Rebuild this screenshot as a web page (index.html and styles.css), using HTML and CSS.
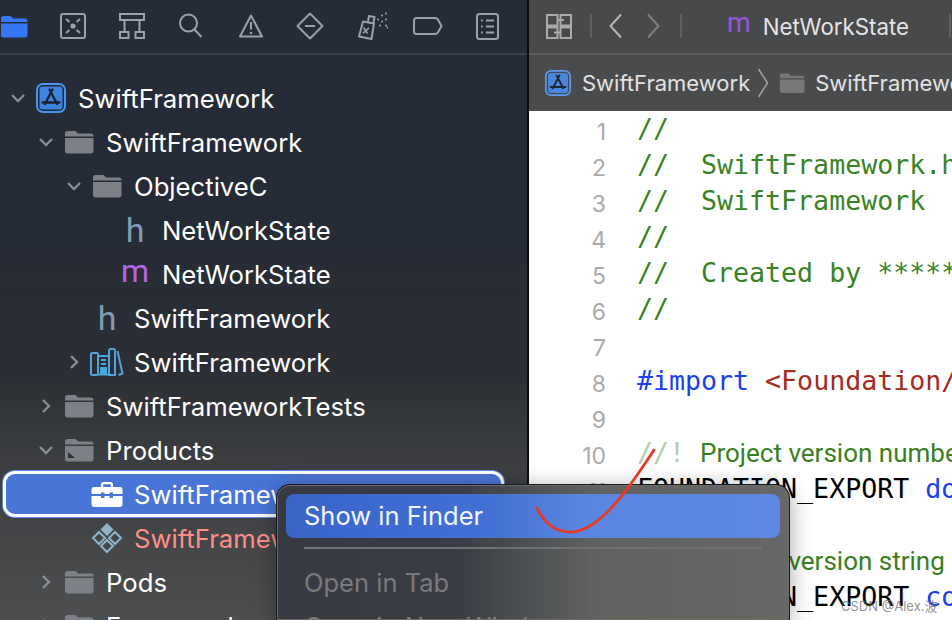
FILE: index.html
```html
<!DOCTYPE html>
<html lang="en">
<head>
<meta charset="utf-8">
<title>Xcode</title>
<link rel="stylesheet" href="styles.css">
</head>
<body>
<div class="app">
  <aside class="sidebar">
    <div class="nav-tabs">
      <svg class="tab tab-folder" width="28" height="24" viewBox="0 0 28 24"><path fill="#3478f6" d="M1 4.500C1 3 2 2 3.500 2h6c1 0 1.600.4 2.300 1.100L13 4.500h12c1.500 0 2.500 1 2.500 2.500v1H1zM1 9.500h26.500V21c0 1.500-1 2.500-2.500 2.500H3.500C2 23.500 1 22.500 1 21z"/></svg>
      <svg class="tab" width="26" height="26" viewBox="0 0 26 26"><rect x="1" y="1" width="24" height="24" rx="2" /><circle cx="13" cy="13" r="2.600" class="fill"/><path d="M6 6l3.500 3M20 6l-3.500 3M6 20l3.500-3M20 20l-3.500-3"/></svg>
      <svg class="tab" width="26" height="26" viewBox="0 0 26 26"><rect x="1" y="1" width="24" height="6"/><rect x="1" y="19" width="8.500" height="6"/><rect x="16.500" y="19" width="8.500" height="6"/><path d="M5.500 7v12M20.500 7v12"/></svg>
      <svg class="tab" width="24" height="26" viewBox="0 0 24 26"><circle cx="9.500" cy="10" r="8.500"/><path d="M15.500 16.500l7 7.500"/></svg>
      <svg class="tab" width="24" height="24" viewBox="0 0 24 24"><path stroke-linejoin="round" d="M12 1.500L23 22.500H1z"/><path d="M12 8v7.500"/><circle cx="12" cy="19" r="1.300" class="fill"/></svg>
      <svg class="tab" width="28" height="28" viewBox="0 0 28 28"><path stroke-linejoin="round" d="M14 1.500L26.500 14 14 26.500 1.500 14z"/><path d="M9 14h10"/></svg>
      <svg class="tab" width="38" height="28" viewBox="0 0 38 28"><path stroke-linejoin="round" d="M13 9.500l11 2L21.500 27 9 24.500zM18 9.500l1-5.500 5.500 1-1 6"/><path d="M13.500 15.500l4 6M19 15.800l-6 5.400" stroke-width="1.600"/><path class="dots" d="M36 1.500h.1M32 3.500h.1M36 7.500h.1M28 7.500h.1M32 9.500h.1M37.500 15.500h.1M30 13.500h.1M36 13.500h.1"/></svg>
      <svg class="tab" width="30" height="20" viewBox="0 0 30 20"><path stroke-linejoin="round" d="M3.500 2H22c1.500 0 2.300.7 3 1.800L28.500 10 25 16.200c-.7 1.100-1.500 1.800-3 1.800H3.500C2 18 1 17 1 15.500v-11C1 3 2 2 3.500 2z"/></svg>
      <svg class="tab" width="23" height="27" viewBox="0 0 23 27"><rect x="1" y="1" width="21" height="25" rx="2.500"/><path d="M10 7.500h8M10 13.500h8M10 19.500h8M5 7.500h1.800M5 13.500h1.800M5 19.500h1.800"/></svg>
    </div>
    <ul class="tree">
      <li class="row"><span class="chev"><svg width="16" height="16" viewBox="0 0 16 16"><path d="M2 5l6 6 6-6"/></svg></span><span class="icon"><svg width="30" height="30" viewBox="0 0 30 30"><rect x="1" y="1" width="28" height="28" rx="6" fill="#1e2735" stroke="#4a94f2" stroke-width="2"/><rect x="3.500" y="3.500" width="23" height="23" rx="3" fill="#3b84e2"/><path fill="none" stroke="#1a2230" stroke-width="2.300" stroke-linecap="round" d="M16.500 6.500L9 21M13.500 6.500L21 21M6.500 19.500h17"/></svg></span><span class="label">SwiftFramework</span></li>
      <li class="row lv1"><span class="chev"><svg width="16" height="16" viewBox="0 0 16 16"><path d="M2 5l6 6 6-6"/></svg></span><span class="icon"><svg class="folder" width="30" height="24" viewBox="0 0 30 24"><path d="M1 3.500C1 2 2 1 3.500 1h7c1 0 1.600.4 2.300 1.100L14 3.500h13c1.500 0 2.500 1 2.500 2.500v.5H1zM1 8h28.500v13c0 1.500-1 2.500-2.500 2.500H3.500C2 23.500 1 22.500 1 21z"/></svg></span><span class="label">SwiftFramework</span></li>
      <li class="row lv2"><span class="chev"><svg width="16" height="16" viewBox="0 0 16 16"><path d="M2 5l6 6 6-6"/></svg></span><span class="icon"><svg class="folder" width="30" height="24" viewBox="0 0 30 24"><path d="M1 3.500C1 2 2 1 3.500 1h7c1 0 1.600.4 2.300 1.100L14 3.500h13c1.500 0 2.500 1 2.500 2.500v.5H1zM1 8h28.500v13c0 1.500-1 2.500-2.500 2.500H3.500C2 23.500 1 22.500 1 21z"/></svg></span><span class="label">ObjectiveC</span></li>
      <li class="row lv3"><span class="chev"></span><span class="icon"><span class="letter letter-h">h</span></span><span class="label">NetWorkState</span></li>
      <li class="row lv3"><span class="chev"></span><span class="icon"><span class="letter letter-m">m</span></span><span class="label">NetWorkState</span></li>
      <li class="row lv2"><span class="chev"></span><span class="icon"><span class="letter letter-h">h</span></span><span class="label">SwiftFramework</span></li>
      <li class="row lv2"><span class="chev"><svg width="16" height="16" viewBox="0 0 16 16"><path d="M5 2l6 6-6 6"/></svg></span><span class="icon"><svg width="34" height="28" viewBox="0 0 34 28" fill="none" stroke="#4ea6d8" stroke-width="2"><rect x="1" y="5" width="7" height="22" rx="1.500"/><path d="M8 8h11M8 26.500h11"/><path d="M19 3c0-1.200.6-2 1.500-2h3c.9 0 1.500.8 1.500 2v24h-6z"/><path d="M27.500 3l5 22.500-4 1.500M11 12h5M11 16h5"/><rect x="11" y="20" width="5" height="5" fill="#4ea6d8"/></svg></span><span class="label">SwiftFramework</span></li>
      <li class="row lv1"><span class="chev"><svg width="16" height="16" viewBox="0 0 16 16"><path d="M5 2l6 6-6 6"/></svg></span><span class="icon"><svg class="folder" width="30" height="24" viewBox="0 0 30 24"><path d="M1 3.500C1 2 2 1 3.500 1h7c1 0 1.600.4 2.300 1.100L14 3.500h13c1.500 0 2.500 1 2.500 2.500v.5H1zM1 8h28.500v13c0 1.500-1 2.500-2.500 2.500H3.500C2 23.500 1 22.500 1 21z"/></svg></span><span class="label">SwiftFrameworkTests</span></li>
      <li class="row lv1"><span class="chev"><svg width="16" height="16" viewBox="0 0 16 16"><path d="M2 5l6 6 6-6"/></svg></span><span class="icon"><svg class="folder" width="30" height="24" viewBox="0 0 30 24"><path d="M1 3.500C1 2 2 1 3.500 1h7c1 0 1.600.4 2.300 1.100L14 3.500h13c1.500 0 2.500 1 2.500 2.500v.5H1zM1 8h28.500v13c0 1.500-1 2.500-2.500 2.500H3.500C2 23.500 1 22.500 1 21z"/><path fill="#2d3035" d="M4 14v6h7z"/></svg></span><span class="label">Products</span></li>
      <li class="row lv2 selected"><span class="chev"></span><span class="icon"><svg width="32" height="26" viewBox="0 0 32 26" fill="#fff"><path d="M10 7V3.500C10 2 11 1 12.500 1h7C21 1 22 2 22 3.500V7h-2.200V3.500c0-.2-.1-.3-.3-.3h-7c-.2 0-.3.1-.3.3V7z"/><path d="M3 6h26c1.500 0 2.500 1 2.500 2.500V13H22v-1.500h-3.500V13h-5v-1.500H10V13H.5V8.500C.5 7 1.500 6 3 6zM.5 15H10v2h3.500v-2h5v2H22v-2h9.500v8.500c0 1.500-1 2.500-2.500 2.500H3c-1.500 0-2.500-1-2.500-2.500z"/></svg></span><span class="label">SwiftFramework</span></li>
      <li class="row lv2 missing"><span class="chev"></span><span class="icon"><svg width="32" height="32" viewBox="0 0 32 32"><path fill="#8fb3c9" d="M16 1l6.500 6.500L16 14 9.500 7.500z"/><path fill="none" stroke="#8fb3c9" stroke-width="2" d="M8 10l6 6-6 6-6-6zM24 10l6 6-6 6-6-6zM16 18l6 6-6 6-6-6z"/></svg></span><span class="label">SwiftFramework</span></li>
      <li class="row lv1"><span class="chev"><svg width="16" height="16" viewBox="0 0 16 16"><path d="M5 2l6 6-6 6"/></svg></span><span class="icon"><svg class="folder" width="30" height="24" viewBox="0 0 30 24"><path d="M1 3.500C1 2 2 1 3.500 1h7c1 0 1.600.4 2.300 1.100L14 3.500h13c1.500 0 2.500 1 2.500 2.500v.5H1zM1 8h28.500v13c0 1.500-1 2.500-2.500 2.500H3.500C2 23.500 1 22.500 1 21z"/></svg></span><span class="label">Pods</span></li>
      <li class="row lv1"><span class="chev"><svg width="16" height="16" viewBox="0 0 16 16"><path d="M5 2l6 6-6 6"/></svg></span><span class="icon"><svg class="folder" width="30" height="24" viewBox="0 0 30 24"><path d="M1 3.500C1 2 2 1 3.500 1h7c1 0 1.600.4 2.300 1.100L14 3.500h13c1.500 0 2.500 1 2.500 2.500v.5H1zM1 8h28.500v13c0 1.500-1 2.500-2.500 2.500H3.500C2 23.500 1 22.500 1 21z"/></svg></span><span class="label">Frameworks</span></li>
    </ul>
  </aside>
  <main class="editor">
    <div class="jump-bar">
      <svg class="related" width="26" height="25" viewBox="0 0 26 25"><path d="M1 1h10.500v10.500H1zM14.500 1H25v10.500H14.500zM1 13.500h10.500V24H1zM14.500 13.500H25V24H14.500zM11.500 6H18M8 18.500h6.500"/></svg>
      <span class="sep"></span>
      <svg class="nav-arrow back" width="13" height="26" viewBox="0 0 13 26"><path d="M12 1.500L1.500 13 12 24.500"/></svg>
      <svg class="nav-arrow fwd" width="13" height="26" viewBox="0 0 13 26"><path d="M1 1.500L11.500 13 1 24.500"/></svg>
      <span class="sep sep-b"></span>
      <span class="file-tab"><span class="tab-letter">m</span><span class="tab-name">NetWorkState</span></span>
      <span class="sep sep-c"></span>
    </div>
    <div class="crumbs">
      <svg class="crumb-app" width="26" height="26" viewBox="0 0 30 30"><rect x="1" y="1" width="28" height="28" rx="6" fill="#454648" stroke="#5b9af0" stroke-width="2"/><rect x="3.500" y="3.500" width="23" height="23" rx="3" fill="#4a86dd"/><path fill="none" stroke="#1f2733" stroke-width="2.300" stroke-linecap="round" d="M16.500 6.500L9 21M13.500 6.500L21 21M6.500 19.500h17"/></svg>
      <span class="crumb">SwiftFramework</span>
      <svg class="crumb-sep" width="12" height="30" viewBox="0 0 12 30"><path d="M1.500 1l9 14-9 14"/></svg>
      <svg class="crumb-folder" width="26" height="22" viewBox="0 0 30 24"><path d="M1 3.500C1 2 2 1 3.500 1h7c1 0 1.600.4 2.300 1.100L14 3.500h13c1.500 0 2.500 1 2.500 2.500v.5H1zM1 8h28.500v13c0 1.500-1 2.500-2.500 2.500H3.500C2 23.500 1 22.500 1 21z"/></svg>
      <span class="crumb">SwiftFramework</span>
    </div>
    <div class="code">
      <div class="line"><span class="num">1</span><span class="c">//</span></div>
      <div class="line"><span class="num">2</span><span class="c">//  SwiftFramework.h</span></div>
      <div class="line"><span class="num">3</span><span class="c">//  SwiftFramework</span></div>
      <div class="line"><span class="num">4</span><span class="c">//</span></div>
      <div class="line"><span class="num">5</span><span class="c">//  Created by ******</span></div>
      <div class="line"><span class="num">6</span><span class="c">//</span></div>
      <div class="line"><span class="num">7</span><span></span></div>
      <div class="line"><span class="num">8</span><span><span class="kw">#import</span> <span class="str">&lt;Foundation/Foundation.h&gt;</span></span></div>
      <div class="line"><span class="num">9</span><span></span></div>
      <div class="line"><span class="num">10</span><span class="doc"><span class="doc-mark">//!</span><span class="doc-text">Project version number</span></span></div>
      <div class="line"><span class="num">11</span><span>FOUNDATION_EXPORT <span class="kw">double</span></span></div>
      <div class="line"><span class="num">12</span><span></span></div>
      <div class="line"><span class="num">13</span><span class="doc"><span class="doc-mark">//!</span><span class="doc-text">Project version string for</span></span></div>
      <div class="line"><span class="num">14</span><span>FOUNDATION_EXPORT <span class="kw">const</span></span></div>
    </div>
  </main>
</div>
<div class="menu">
  <div class="menu-item active">Show in Finder</div>
  <div class="menu-divider"></div>
  <div class="menu-item disabled">Open in Tab</div>
  <div class="menu-item disabled">Open in New Window</div>
</div>
<svg class="scribble" width="130" height="100" viewBox="0 0 130 100"><path d="M9 60C16 75 28 85 45 84 72 81 98 45 126 2"/></svg>
<span class="watermark">CSDN @Alex.波</span>
</body>
</html>
```
FILE: styles.css
```css
* { box-sizing: border-box; }
html, body { margin: 0; height: 100%; overflow: hidden; }
body { font-family: Inter, "Noto Sans CJK SC", sans-serif; background: #fff; position: relative; }

.app { display: flex; height: 620px; overflow: hidden; }

/* Navigator */
.sidebar {
  width: 527px; flex: none; overflow: hidden;
  background: linear-gradient(180deg, #252c38 0%, #252b36 35%, #2b2e34 60%, #3c3e41 75%, #4c4e4f 100%);
}
.nav-tabs {
  height: 55px; margin-left: -16px; padding-bottom: 1px;
  display: grid; grid-template-columns: repeat(9, 59.25px); justify-items: center; align-items: center;
  border-bottom: 2px solid #393e47;
}
.tab { fill: none; stroke: #9ca1a8; stroke-width: 2; }
.tab .fill { fill: #9ca1a8; stroke: none; }
.tab .dots { stroke-width: 2; stroke-linecap: round; }
.tab-folder { stroke: none; }

.tree { list-style: none; margin: 0; padding: 21px 0 0; }
.row { height: 44px; display: flex; align-items: center; padding-left: 6px; color: #fff; font-size: 25.700px; white-space: nowrap; }
.lv1 { padding-left: 34px; }
.lv2 { padding-left: 62px; }
.lv3 { padding-left: 90px; }
.chev { width: 24px; flex: none; display: flex; justify-content: center; }
.chev svg { fill: none; stroke: #8a8e94; stroke-width: 2.400; }
.icon { width: 42px; margin-right: 6px; flex: none; display: flex; justify-content: center; align-items: center; }
.folder { fill: #7d8187; }
.letter { font-family: Roboto, sans-serif; font-weight: 400; line-height: 1; }
.letter-h { font-size: 34px; color: #7f9db5; }
.letter-m { font-size: 32px; color: #b565ea; position: relative; top: -3px; }
.selected {
  margin: 2px 26px 2px 6px; padding-left: 56px; height: 40px;
  background: #4a75d8; border-radius: 9px; box-shadow: 0 0 0 3px #fff, 0 0 0 4px #5f8ce6;
}
.missing .label { color: #ff8f88; }

/* Editor */
.editor { flex: 1; min-width: 0; border-left: 2px solid #0c0c0e; overflow: hidden; }
.jump-bar {
  height: 55px; background: #48494b; border-bottom: 2px solid #5b5c5e; display: flex; align-items: center; padding: 0 0 1px 17px;
}
.related { fill: none; stroke: #a9aaab; stroke-width: 2; flex: none; }
.sep { width: 2px; height: 24px; background: #5f6062; margin-left: 18px; flex: none; }
.nav-arrow { fill: none; stroke-width: 2; flex: none; }
.back { stroke: #b4b5b6; margin-left: 17px; }
.fwd { stroke: #7d7e80; margin-left: 25px; }
.sep-b { margin-left: 20px; }
.file-tab { display: flex; align-items: center; margin-left: 45px; color: #e4e4e4; font-size: 22.300px; white-space: nowrap; }
.tab-letter { font-family: Roboto, sans-serif; font-weight: 400; font-size: 27px; line-height: 1; color: #9a55dd; margin-right: 12px; position: relative; top: -3px; }
.sep-c { margin-left: 40px; }
.crumbs {
  height: 56px; background: #4a4b4d; display: flex; align-items: center; padding-left: 16px; color: #e2e2e2; font-size: 22px; white-space: nowrap;
}
.crumb-app { flex: none; }
.crumb { margin-left: 11px; }
.crumb-sep { fill: none; stroke: #a3a4a5; stroke-width: 1.500; margin-left: 7px; flex: none; }
.crumb-folder { fill: #77787a; margin-left: 10px; flex: none; }
.crumb-folder + .crumb { margin-left: 10px; }

.code { font-family: "DejaVu Sans Mono", monospace; font-size: 26.600px; color: #000; }
.line { height: 36px; line-height: 36px; display: grid; grid-template-columns: 77px 1fr; column-gap: 31px; overflow: hidden; }
.line > span { white-space: pre; }
.num { font-family: Inter, sans-serif; font-size: 23px; color: #aaa; text-align: right; padding-top: 3px; font-weight: 400; }
.c { color: #3a8225; }
.kw { color: #1b40f0; }
.str { color: #a52a20; }
.doc { color: #3a7e22; }
.doc-mark { color: #b3cfaa; margin-right: 15px; }
.doc-text { font-family: Roboto, sans-serif; font-size: 26px; }

/* Context menu */
.menu {
  position: absolute; left: 276px; top: 484px; width: 514px; height: 136px; padding: 9px; overflow: hidden;
  border-radius: 14px 14px 0 0; border: 1px solid #17181b; border-bottom: 0;
  background: linear-gradient(90deg, #383a43 0%, #3a3c44 35%, #5f625f 62%, #666866 100%);
  box-shadow: inset 0 0 0 1px #6a6c70, 0 4px 22px rgba(0,0,0,.35);
  font-size: 25.500px; color: #fff;
}
.menu-item { height: 44px; line-height: 44px; padding-left: 18px; white-space: nowrap; }
.active { background: linear-gradient(90deg, #3965c9 0%, #4270d4 40%, #5a85e0 60%, #5e88e3 100%); border-radius: 8px; color: #f3f6ff; }
.menu-divider { height: 2px; margin: 9px 18px 12px; background: #6f7175; }
.disabled { color: #797a7e; }

/* Overlays */
.scribble { position: absolute; left: 528px; top: 448px; fill: none; stroke: #e63a26; stroke-width: 2.800; stroke-linecap: round; }
.watermark { position: absolute; left: 841px; top: 596px; font-size: 13px; color: rgba(110,110,110,.75); white-space: nowrap; }
```
